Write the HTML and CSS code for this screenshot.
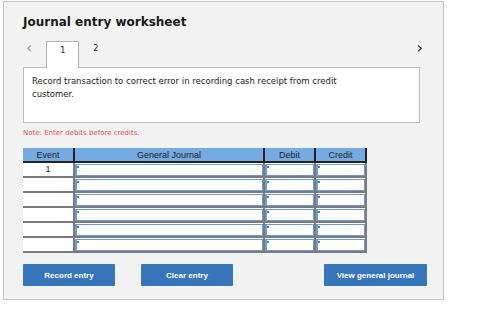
FILE: index.html
```html
<!DOCTYPE html>
<html lang="en">
  <head>
    <meta charset="UTF-8" />
    <title>Journal entry worksheet</title>
    <link rel="stylesheet" href="styles.css">
  </head>
  <body>
    <div class="panel">
      <h1>Journal entry worksheet</h1>

      <div class="tabs">
        <span class="arrow prev">&lsaquo;</span>
        <span class="tab active">1</span>
        <span class="tab">2</span>
        <span class="arrow next">&rsaquo;</span>
      </div>

      <div class="question">
        Record transaction to correct error in recording cash receipt from credit
        customer.
      </div>

      <p class="note">Note: Enter debits before credits.</p>

      <table class="journal">
        <thead>
          <tr>
            <th class="col-event">Event</th>
            <th class="col-gj">General Journal</th>
            <th class="col-debit">Debit</th>
            <th class="col-credit">Credit</th>
          </tr>
        </thead>
        <tbody>
          <tr>
            <td class="event">1</td>
            <td><div class="field"></div></td>
            <td><div class="field"></div></td>
            <td><div class="field"></div></td>
          </tr>
          <tr>
            <td class="event"></td>
            <td><div class="field"></div></td>
            <td><div class="field"></div></td>
            <td><div class="field"></div></td>
          </tr>
          <tr>
            <td class="event"></td>
            <td><div class="field"></div></td>
            <td><div class="field"></div></td>
            <td><div class="field"></div></td>
          </tr>
          <tr>
            <td class="event"></td>
            <td><div class="field"></div></td>
            <td><div class="field"></div></td>
            <td><div class="field"></div></td>
          </tr>
          <tr>
            <td class="event"></td>
            <td><div class="field"></div></td>
            <td><div class="field"></div></td>
            <td><div class="field"></div></td>
          </tr>
          <tr>
            <td class="event"></td>
            <td><div class="field"></div></td>
            <td><div class="field"></div></td>
            <td><div class="field"></div></td>
          </tr>
        </tbody>
      </table>

      <div class="actions">
        <button class="btn record">Record entry</button>
        <button class="btn clear">Clear entry</button>
        <button class="btn view">View general journal</button>
      </div>
    </div>
  </body>
</html>
```

FILE: styles.css
```css
body {
  margin: 0;
  padding: 1px 0 0 3px;
  background-color: #fff;
  font-family: "DejaVu Sans", Verdana, sans-serif;
}

.panel {
  width: 441px;
  height: 299px;
  box-sizing: border-box;
  background-color: #f2f2f2;
  border: 1px solid #c4c4c4;
  padding: 0 0 0 19px;
}

h1 {
  margin: 13px 0 0 0;
  font-size: 12px;
  font-weight: bold;
  color: #1a1a1a;
  line-height: 15px;
}

.tabs {
  display: flex;
  align-items: flex-end;
  height: 27px;
  margin-top: 10px;
  width: 400px;
  font-size: 8px;
  color: #222;
}

.tab {
  width: 33px;
  height: 27px;
  box-sizing: border-box;
  text-align: center;
  padding-top: 4px;
}

.tab.active {
  background-color: #fff;
  border: 1px solid #b0b0b0;
  border-bottom: none;
  margin-left: 14px;
  position: relative;
  top: 1px;
}

.arrow {
  font-size: 16px;
  line-height: 16px;
  align-self: flex-start;
}

.prev {
  color: #999;
  margin-left: 3px;
}

.next {
  margin-left: auto;
  color: #222;
}

.question {
  width: 397px;
  height: 56px;
  box-sizing: border-box;
  background-color: #fff;
  border: 1px solid #bdbdbd;
  padding: 7px 40px 8px 8px;
  font-size: 8.5px;
  line-height: 13px;
  color: #222;
}

.note {
  margin: 5px 0 0 0;
  font-size: 7px;
  color: #d9534f;
  line-height: 10px;
}

.journal {
  margin-top: 10px;
  border-collapse: collapse;
  table-layout: fixed;
  width: 336px;
  font-family: "Liberation Sans", Arial, sans-serif;
}

.journal th {
  background-color: #75aae2;
  font-size: 9px;
  font-weight: normal;
  color: #222;
  height: 13px;
  padding: 0;
  border-left: 2px solid #222;
  border-bottom: 2px solid #222;
}

.journal th:first-child {
  border-left: none;
}

.journal th:last-child {
  border-right: 2px solid #222;
}

.col-event {
  width: 50px;
}

.col-gj {
  width: 188px;
}

.col-debit {
  width: 49px;
}

.col-credit {
  width: 49px;
}

.journal td {
  height: 13px;
  padding: 0;
  border-left: 2px solid #7b7b7b;
  border-bottom: 2px solid #7b7b7b;
  background-color: #fff;
}

.journal td:first-child {
  border-left: none;
}

.journal td:last-child {
  border-right: 2px solid #7b7b7b;
}

.journal td.event {
  text-align: center;
  vertical-align: top;
  font-size: 9px;
  color: #222;
  line-height: 12px;
}

.field {
  position: relative;
  height: 12px;
  margin-top: 1px;
  border: 1px solid #6d9ad2;
  border-left-width: 2px;
  box-sizing: border-box;
  background-color: #fff;
}

.field::before {
  content: "";
  position: absolute;
  left: 0;
  top: 1px;
  width: 2px;
  height: 2px;
  background-color: #3c7fd0;
}

.actions {
  display: flex;
  width: 404px;
  margin-top: 11px;
}

.btn {
  height: 22px;
  background-color: #3776ba;
  color: #fff;
  border: none;
  border-radius: 1px;
  font-family: "Liberation Sans", Arial, sans-serif;
  font-size: 8px;
  font-weight: bold;
  padding: 0;
  cursor: pointer;
}

.record {
  width: 92px;
}

.clear {
  width: 92px;
  margin-left: 26px;
}

.view {
  width: 103px;
  margin-left: auto;
}
```
